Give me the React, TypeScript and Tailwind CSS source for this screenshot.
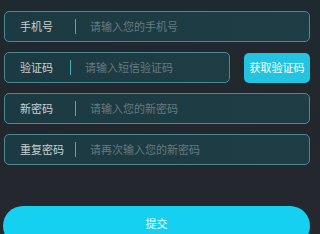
import React from "react";

const font = { fontFamily: '"Noto Sans CJK SC", "Noto Sans", sans-serif' };

function Field({ label, placeholder, labelW }: { label: string; placeholder: string; labelW: string }) {
  return (
    <div className="flex-1 h-[31px] flex items-center rounded-[5px] border border-[#4a8994] bg-gradient-to-r from-[#1c3a42] to-[#1f3d45] pl-[15px]">
      <span className={`${labelW} shrink-0 text-[11px] leading-none text-[#c9d2d4]`}>{label}</span>
      <span className="w-[1px] h-[15px] bg-[#3cb2bf] shrink-0" />
      <span className="ml-[14px] text-[11px] leading-none text-[#667a80]">{placeholder}</span>
    </div>
  );
}

export default function App() {
  return (
    <div
      className="w-[320px] h-[234px] overflow-hidden bg-gradient-to-b from-[#1e2a30] via-[#22272d] to-[#25282d] px-[4px] pt-[11px] flex flex-col"
      style={font}
    >
      <div className="flex flex-col gap-[10px] pr-[6px]">
        <div className="flex">
          <Field label="手机号" placeholder="请输入您的手机号" labelW="w-[55px]" />
        </div>
        <div className="flex items-center gap-[14px]">
          <Field label="验证码" placeholder="请输入短信验证码" labelW="w-[50px]" />
          <button className="w-[66px] h-[30px] rounded-[5px] bg-[#22c4e2] text-white text-[11px] leading-none shrink-0">
            获取验证码
          </button>
        </div>
        <div className="flex">
          <Field label="新密码" placeholder="请输入您的新密码" labelW="w-[55px]" />
        </div>
        <div className="flex">
          <Field label="重复密码" placeholder="请再次输入您的新密码" labelW="w-[55px]" />
        </div>
      </div>
      <div className="mt-[41px] pr-[6px]">
        <button className="w-[307px] -ml-[1px] h-[40px] rounded-full bg-[#16d0f2] text-[#e8fbff] text-[11px] leading-none flex items-start justify-center pt-[12px]">
          提交
        </button>
      </div>
    </div>
  );
}
